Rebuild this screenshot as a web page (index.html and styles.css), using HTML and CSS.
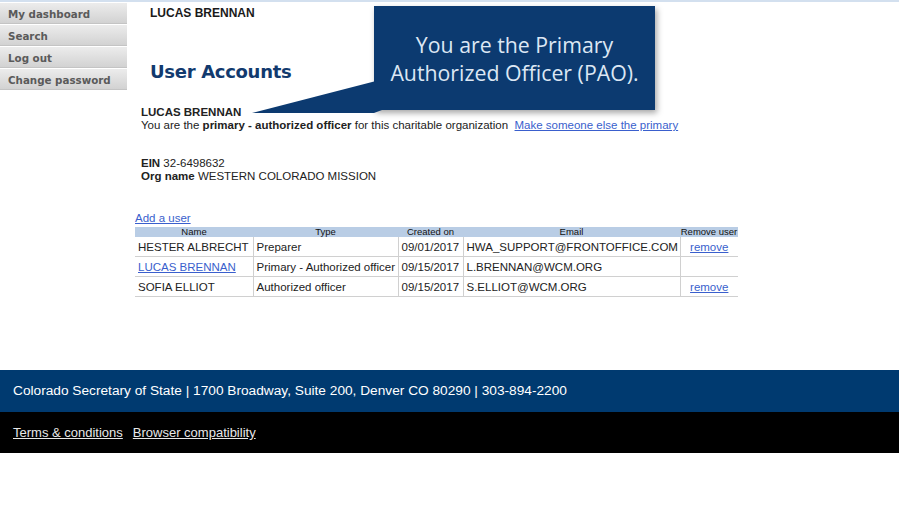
FILE: index.html
```html
<!DOCTYPE html>
<html>
<head>
<meta charset="utf-8">
<link rel="stylesheet" href="styles.css">
</head>
<body>
<div class="topline"></div>
<div class="page">
  <nav class="sidenav">
    <a class="navitem">My dashboard</a>
    <a class="navitem">Search</a>
    <a class="navitem">Log out</a>
    <a class="navitem">Change password</a>
  </nav>
  <main class="main">
    <div class="username">LUCAS BRENNAN</div>
    <h1 class="title">User Accounts</h1>
    <div class="info">
      <div class="bold">LUCAS BRENNAN</div>
      <div>You are the <b>primary - authorized officer</b> for this charitable organization&nbsp; <a class="link" href="#">Make someone else the primary</a></div>
    </div>
    <div class="org">
      <div><b>EIN</b> 32-6498632</div>
      <div><b>Org name</b> WESTERN COLORADO MISSION</div>
    </div>
    <a class="link adduser" href="#">Add a user</a>
    <table class="users">
      <colgroup><col class="c1"><col class="c2"><col class="c3"><col class="c4"><col class="c5"></colgroup>
      <thead>
        <tr><th>Name</th><th>Type</th><th>Created on</th><th>Email</th><th>Remove user</th></tr>
      </thead>
      <tbody>
        <tr><td>HESTER ALBRECHT</td><td>Preparer</td><td>09/01/2017</td><td>HWA_SUPPORT@FRONTOFFICE.COM</td><td class="center"><a class="link" href="#">remove</a></td></tr>
        <tr><td><a class="link" href="#">LUCAS BRENNAN</a></td><td>Primary - Authorized officer</td><td>09/15/2017</td><td>L.BRENNAN@WCM.ORG</td><td></td></tr>
        <tr><td>SOFIA ELLIOT</td><td>Authorized officer</td><td>09/15/2017</td><td>S.ELLIOT@WCM.ORG</td><td class="center"><a class="link" href="#">remove</a></td></tr>
      </tbody>
    </table>
  </main>
</div>
<footer class="footer">
  <div class="footer-blue">Colorado Secretary of State | 1700 Broadway, Suite 200, Denver CO 80290 | 303-894-2200</div>
  <div class="footer-black"><a href="#">Terms &amp; conditions</a><a href="#">Browser compatibility</a></div>
</footer>
<div class="callout">
  <svg class="tail" width="130" height="38" viewBox="0 0 130 38"><polygon points="0,37 124,5 130,5 130,34 122,37" fill="#0c3a70"/></svg>
  <div class="callout-text">You are the Primary<br>Authorized Officer (PAO).</div>
</div>
</body>
</html>
```
FILE: styles.css
```css
html, body { margin: 0; padding: 0; background: #fff; }
body { font-family: "Liberation Sans", Arial, sans-serif; font-size: 11.5px; color: #222; position: relative; width: 899px; height: 505px; overflow: hidden; }
.topline { height: 2px; background: #d3e0ef; }
.page { display: flex; height: 368px; }
.sidenav { width: 127px; display: flex; flex-direction: column; gap: 1px; padding-top: 1px; }
.navitem { display: block; height: 20px; line-height: 22px; padding-left: 8px; font-family: "DejaVu Sans", Verdana, sans-serif; font-weight: bold; font-size: 10.3px; color: #5a5a5a; background: linear-gradient(#ececec, #d2d2d2); border-bottom: 1px solid #c4c4c4; }
.main { flex: 1; padding-left: 8px; }
.username { margin-left: 15px; margin-top: 4px; font-weight: bold; font-size: 12px; color: #1a1a1a; }
.title { margin: 41px 0 0 15px; font-family: "DejaVu Sans", Verdana, sans-serif; font-weight: bold; font-size: 18px; color: #123a6e; letter-spacing: -0.3px; }
.info { margin: 24px 0 0 6px; line-height: 13px; }
.bold { font-weight: bold; }
.org { margin: 25px 0 0 6px; line-height: 13px; }
.link { color: #3a5fcd; text-decoration: underline; }
.adduser { display: block; margin-top: 28px; line-height: 14px; }
.users { border-collapse: collapse; table-layout: fixed; width: 603px; margin-top: 2px; font-size: 11.5px; }
.users th { background: #b9cde5; font-weight: normal; font-size: 9.5px; height: 10px; line-height: 10px; padding: 0; color: #111; white-space: nowrap; overflow: visible; }
.users td { height: 19px; padding: 0 3px; border: 1px solid #d0d0d0; white-space: nowrap; overflow: hidden; color: #222; }
.users tbody tr:first-child td { border-top: none; }
.users td:first-child { border-left: none; }
.users td:last-child { border-right: none; }
.c1 { width: 118px; } .c2 { width: 145px; } .c3 { width: 65px; } .c4 { width: 217px; } .c5 { width: 58px; }
.center { text-align: center; }
.footer-blue { height: 42px; line-height: 42px; background: #003a70; color: #fff; font-size: 13.7px; padding-left: 13px; }
.footer-black { height: 41px; line-height: 41px; background: #000; padding-left: 13px; display: flex; gap: 10px; font-size: 13px; }
.footer-black a { color: #e8e8e8; text-decoration: underline; }
.callout { position: absolute; left: 374px; top: 6px; width: 281px; height: 104px; background: #0c3a70; box-shadow: 2px 3px 6px rgba(0,0,0,0.35); display: flex; align-items: center; justify-content: center; }
.tail { position: absolute; left: -122px; top: 70px; }
.callout-text { font-family: "Open Sans", sans-serif; font-size: 21.3px; line-height: 28px; color: #dce7f4; text-align: center; margin-top: 1px; }
```
